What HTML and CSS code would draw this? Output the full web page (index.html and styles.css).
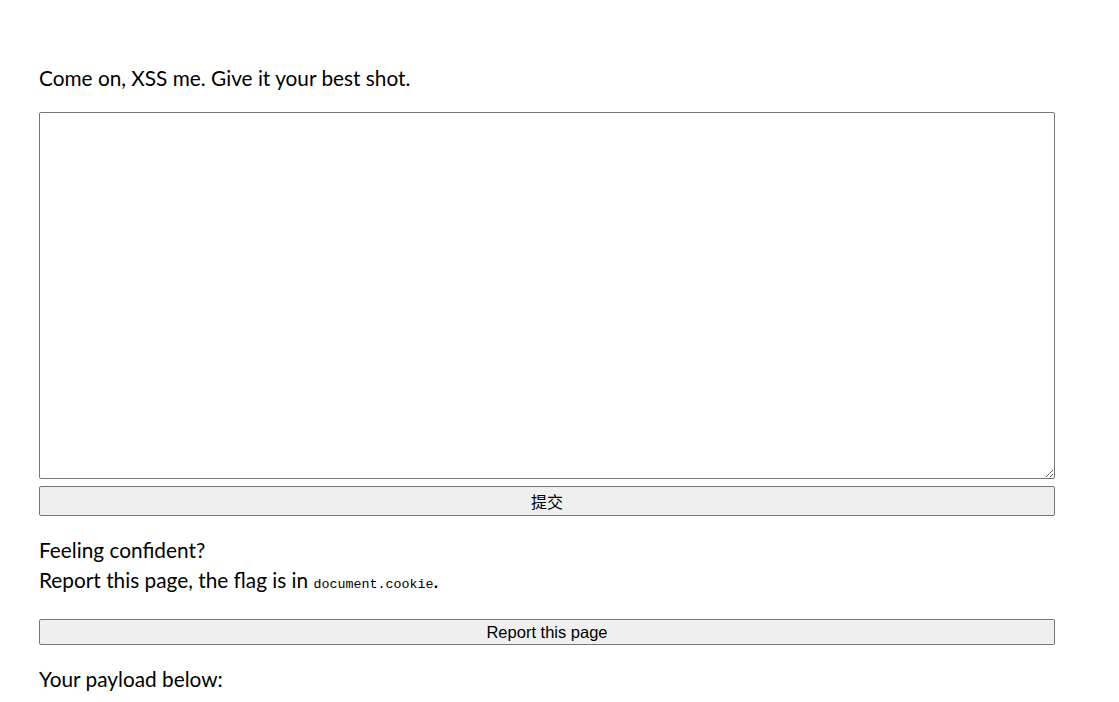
FILE: index.html
```html
<!DOCTYPE html>
<html>
<head>
<meta charset="utf-8">
<link rel="stylesheet" href="styles.css">
</head>
<body>
<main class="page">
  <p class="intro">Come on, XSS me. Give it your best shot.</p>
  <form class="form">
    <textarea class="payload"></textarea>
    <button type="button" class="btn btn-submit">提交</button>
  </form>
  <p class="confident">Feeling confident?<br>Report this page, the flag is in <code class="code">document.cookie</code>.</p>
  <button type="button" class="btn btn-report">Report this page</button>
  <p class="below">Your payload below:</p>
</main>
</body>
</html>
```
FILE: styles.css
```css
html, body {
  margin: 0;
  padding: 0;
  background: #fff;
}
.page {
  padding: 63px 64px 0 39px;
  font-family: Lato, "Noto Sans", sans-serif;
  font-size: 20.8px;
  color: #000;
  display: flex;
  flex-direction: column;
}
.intro {
  margin: 0;
  line-height: 30px;
}
.form {
  display: flex;
  flex-direction: column;
  margin-top: 19px;
}
.payload {
  box-sizing: border-box;
  width: 100%;
  height: 367px;
  border: 1px solid #767676;
  border-radius: 2px;
  margin: 0;
  resize: vertical;
}
.btn {
  box-sizing: border-box;
  width: 100%;
  background: #efefef;
  border: 1px solid #767676;
  border-radius: 2px;
  color: #000;
  margin: 0;
  padding: 0;
}
.btn-submit {
  margin-top: 7px;
  height: 30px;
  font-family: "Noto Sans CJK SC", sans-serif;
  font-size: 16px;
}
.confident {
  margin: 19px 0 0;
  line-height: 30px;
}
.code {
  font-family: "Liberation Mono", "DejaVu Sans Mono", monospace;
  font-size: 13.33px;
}
.btn-report {
  margin-top: 19px;
  height: 26px;
  font-family: "Liberation Sans", Arial, sans-serif;
  font-size: 16.5px;
}
.below {
  margin: 19px 0 0;
  line-height: 30px;
}
```
